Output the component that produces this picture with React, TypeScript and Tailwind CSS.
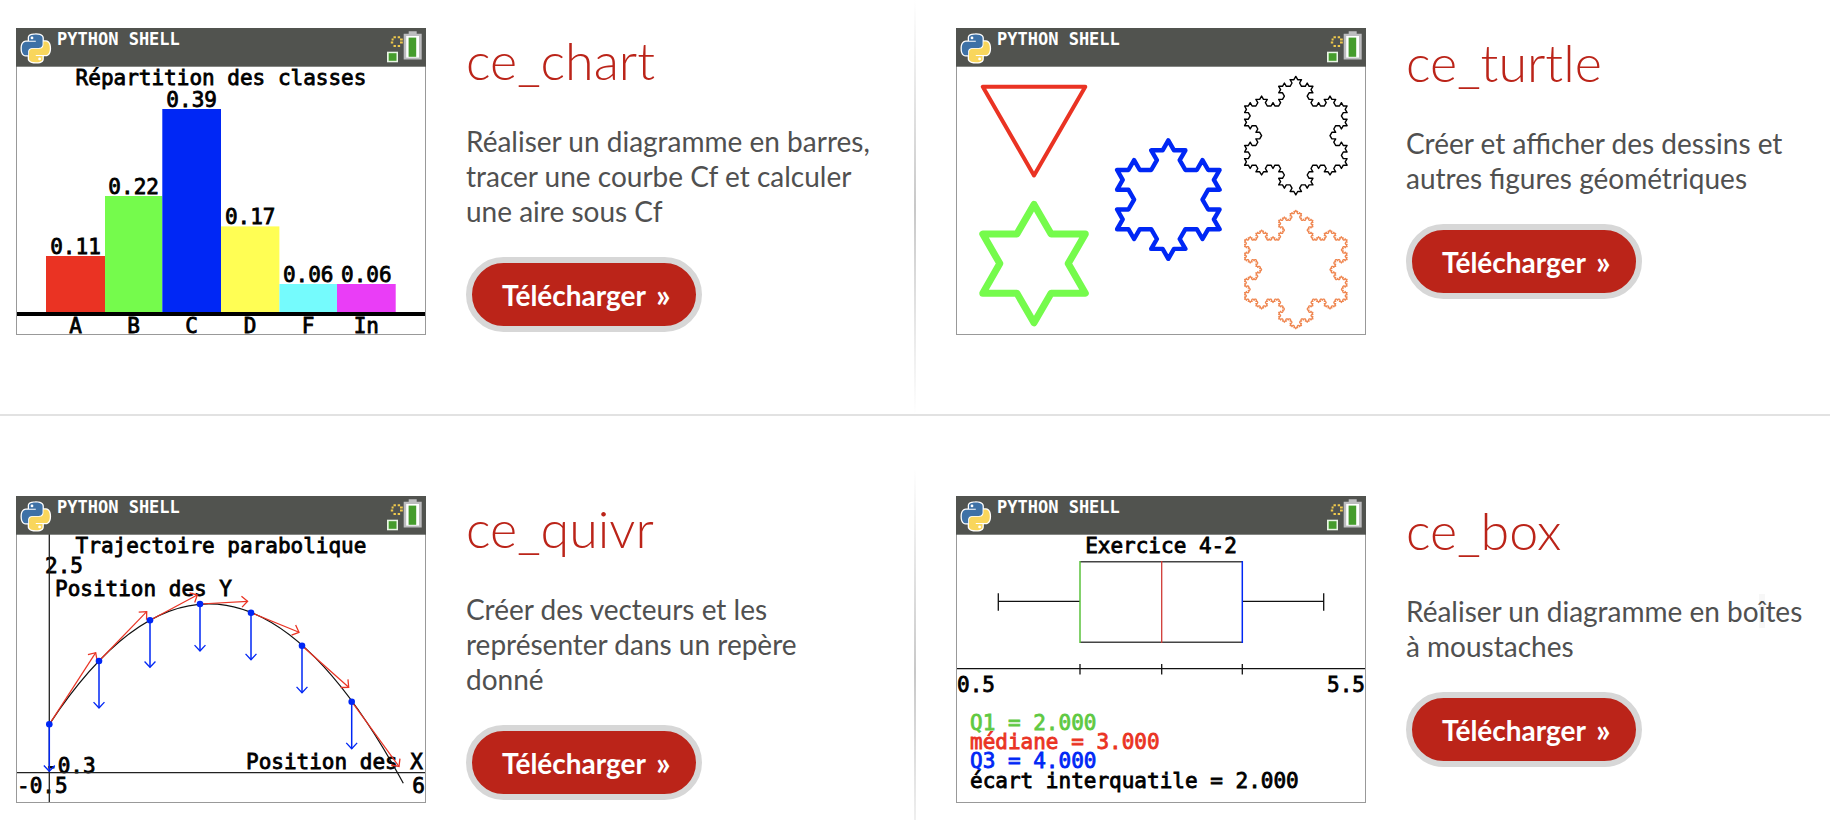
import type { ReactNode } from "react";

type Point = [number, number];

/* Replaces every edge by the four edges of the Koch curve, `depth` times. */
function koch(points: Point[], depth: number): Point[] {
  if (depth === 0) return points;
  const next: Point[] = [];
  points.forEach(([x1, y1], i) => {
    const [x2, y2] = points[(i + 1) % points.length];
    const dx = (x2 - x1) / 3;
    const dy = (y2 - y1) / 3;
    const h = Math.sqrt(3) / 2;
    next.push(
      [x1, y1],
      [x1 + dx, y1 + dy],
      [x1 + dx * 1.5 + dy * h, y1 + dy * 1.5 - dx * h],
      [x1 + dx * 2, y1 + dy * 2],
    );
  });
  return koch(next, depth - 1);
}

function Snowflake({ cx, top, depth, color, width }: { cx: number; top: number; depth: number; color: string; width: number }) {
  const side = 102.5;
  const base: Point[] = [
    [cx - side / 2, top],
    [cx + side / 2, top],
    [cx, top + (side * Math.sqrt(3)) / 2],
  ];
  const points = koch(base, depth)
    .map(([x, y]) => `${x.toFixed(1)},${y.toFixed(1)}`)
    .join(" ");
  return <polygon points={points} fill="none" stroke={color} strokeWidth={width} strokeLinejoin="round" />;
}

function Label({ x, y, anchor = "middle", color = "#000", children }: { x: number; y: number; anchor?: "start" | "middle" | "end"; color?: string; children: string }) {
  return (
    <text x={x} y={y} textAnchor={anchor} fill={color} stroke={color} strokeWidth={0.8} fontSize={21}>
      {children}
    </text>
  );
}

function Screen({ title, children }: { title: string; children: ReactNode }) {
  return (
    <svg viewBox="0 0 410 307" role="img" aria-label={title} className="w-[410px] shrink-0 overflow-visible font-['DejaVu_Sans_Mono',monospace]">
      <rect width={410} height={307} fill="#fff" />
      {children}
      <rect x={0.5} y={0.5} width={409} height={306} fill="none" stroke="#999" />
      <rect width={410} height={38.7} fill="#51534f" />
      <g transform="translate(3.8 4.4)" strokeLinejoin="round">
        <g fill="#fff" stroke="#fff" strokeWidth={2.6}>
          <path d={PYTHON_TOP} />
          <path d={PYTHON_BOTTOM} />
        </g>
        <path d={PYTHON_TOP} fill="#3e71a6" />
        <path d={PYTHON_BOTTOM} fill="#f9d65c" />
        <circle cx={12.2} cy={5.5} r={1.4} fill="#fff" />
        <circle cx={19.8} cy={26.5} r={1.4} fill="#fff" />
      </g>
      <text x={41} y={17} fill="#fff" fontSize={17} fontWeight={700}>
        PYTHON SHELL
      </text>
      <g fill="none" stroke="#efc94c" strokeWidth={2}>
        <path d="M377.5 9.3h2.4M381.7 9.3h2.4M377.5 18h2.4M381.7 18h2.4M375.6 11.4h2M384 11.4h2.8M374.8 14.6h2.4M384 14.6h2.8" />
      </g>
      <rect x={371} y={23.7} width={11} height={10.6} fill="#e9f5e5" />
      <rect x={372.7} y={25.2} width={7.8} height={7.6} fill="#459c2c" />
      <path d="M392.7 3.3h8v2.4h5v25.9h-18V5.7h5z" fill="#bdbdbf" />
      <rect x={390.2} y={8} width={12.8} height={21.6} fill="#fff" />
      <rect x={392.6} y={9.6} width={7.6} height={19.2} fill="#459c2c" />
    </svg>
  );
}

const PYTHON_TOP =
  "M15.885 2.1c-7.1 0-6.651 3.07-6.651 3.07v3.19h6.752v1H6.545S2 8.8 2 16.005s4.013 6.912 4.013 6.912H8.33v-3.361s-.13-4.013 3.9-4.013h6.762s3.772.06 3.772-3.652V5.8s.572-3.712-6.842-3.712z";
const PYTHON_BOTTOM =
  "M16.085 29.91c7.1 0 6.651-3.08 6.651-3.08v-3.18h-6.751v-1h9.47S30 23.158 30 15.995s-4.013-6.912-4.013-6.912H23.64V12.4s.13 4.013-3.9 4.013h-6.765S9.2 16.356 9.2 20.068V26.2s-.572 3.712 6.842 3.712z";

const BARS = [
  { name: "A", value: "0.11", x: 30, end: 89, y: 228, color: "#ea3323" },
  { name: "B", value: "0.22", x: 89, end: 146.3, y: 168, color: "#75fb4c" },
  { name: "C", value: "0.39", x: 146.3, end: 205, y: 81, color: "#0027f5" },
  { name: "D", value: "0.17", x: 205, end: 263.4, y: 198.4, color: "#fffe54" },
  { name: "F", value: "0.06", x: 263.4, end: 321, y: 256, color: "#75fbfd" },
  { name: "In", value: "0.06", x: 321, end: 379.7, y: 256, color: "#ea3df7" },
];

function ChartScreen() {
  return (
    <Screen title="Répartition des classes">
      <Label x={205} y={57}>Répartition des classes</Label>
      {BARS.map((b) => (
        <g key={b.name}>
          <rect x={b.x} y={b.y} width={b.end - b.x} height={286 - b.y} fill={b.color} />
          <Label x={(b.x + b.end) / 2} y={b.y - 2}>{b.value}</Label>
          <Label x={(b.x + b.end) / 2} y={304.6}>{b.name}</Label>
        </g>
      ))}
      <rect y={284} width={410} height={4} fill="#000" />
    </Screen>
  );
}

function TurtleScreen() {
  return (
    <Screen title="Flocons de Koch">
      <Snowflake cx={78} top={58.7} depth={0} color="#ea3323" width={4} />
      <Snowflake cx={78} top={206} depth={1} color="#75fb4c" width={7} />
      <Snowflake cx={212.3} top={142} depth={2} color="#0027f5" width={4.4} />
      <Snowflake cx={339.8} top={78} depth={3} color="#000" width={1.4} />
      <Snowflake cx={339.8} top={212} depth={4} color="#ef8650" width={1.3} />
    </Screen>
  );
}

const VECTORS: { from: Point; to: Point }[] = [
  { from: [33.3, 228.3], to: [79.7, 156.7] },
  { from: [83, 165], to: [130.7, 115.7] },
  { from: [134, 124.3], to: [181.3, 99] },
  { from: [184, 108], to: [231.6, 105.3] },
  { from: [235, 116.7], to: [283, 136.3] },
  { from: [286, 149.7], to: [332.7, 191.3] },
  { from: [335.7, 205.7], to: [383, 270.5] },
];

function Arrow({ from, to, color, width }: { from: Point; to: Point; color: string; width: number }) {
  const angle = Math.atan2(to[1] - from[1], to[0] - from[0]);
  const wing = (turn: number) => `${to[0] - 8 * Math.cos(angle + turn)} ${to[1] - 8 * Math.sin(angle + turn)}`;
  return (
    <g fill="none" stroke={color}>
      <path d={`M${from[0]} ${from[1]}L${to[0]} ${to[1]}`} strokeWidth={width} />
      <path d={`M${wing(0.75)}L${to[0]} ${to[1]}L${wing(-0.75)}`} strokeWidth={1.3} />
    </g>
  );
}

function QuiverScreen() {
  return (
    <Screen title="Trajectoire parabolique">
      <Label x={205} y={57}>Trajectoire parabolique</Label>
      <Label x={29} y={77} anchor="start">2.5</Label>
      <Label x={39} y={100} anchor="start">Position des Y</Label>
      <Label x={29} y={277} anchor="start">-0.3</Label>
      <Label x={1} y={297} anchor="start">-0.5</Label>
      <Label x={409} y={297} anchor="end">6</Label>
      <Label x={407} y={273} anchor="end">Position des X</Label>
      <path d="M33.3 38V306M0 276.7H410" stroke="#222" strokeWidth={1.3} />
      <path d="M33.3 228.3Q210.3 -39 387.3 287.3" fill="none" stroke="#111" strokeWidth={1.2} />
      {VECTORS.map(({ from, to }) => (
        <g key={from[0]}>
          <Arrow from={from} to={to} color="#ea3323" width={1.2} />
          <Arrow from={from} to={[from[0], from[1] + 47]} color="#0027f5" width={1.5} />
          <circle cx={from[0]} cy={from[1]} r={3.3} fill="#0027f5" />
        </g>
      ))}
    </Screen>
  );
}

function BoxScreen() {
  return (
    <Screen title="Exercice 4-2">
      <Label x={205} y={57}>Exercice 4-2</Label>
      <g fill="none" stroke="#111" strokeWidth={1.3}>
        <path d="M42.3 97.3V114.7M42.3 105.4H124M367.7 97.3V114.7M286.3 105.4H367.7" />
        <path d="M0 172.7H410M124 168V178.4M205.7 168V178.4M286.3 168V178.4" />
        <path d="M124 65.7H286.3M124 146.3H286.3" strokeWidth={1.6} stroke="#444" />
        <path d="M124 65V147" stroke="#5ac23b" strokeWidth={1.5} />
        <path d="M205.7 65V147" stroke="#d03a36" />
        <path d="M286.3 65V147" stroke="#0027f5" strokeWidth={1.5} />
      </g>
      <Label x={1} y={196} anchor="start">0.5</Label>
      <Label x={409} y={196} anchor="end">5.5</Label>
      <Label x={14} y={234} anchor="start" color="#5fc943">Q1 = 2.000</Label>
      <Label x={14} y={253} anchor="start" color="#ea3323">médiane = 3.000</Label>
      <Label x={14} y={272} anchor="start" color="#0027f5">Q3 = 4.000</Label>
      <Label x={14} y={292} anchor="start">écart interquatile = 2.000</Label>
    </Screen>
  );
}

function Module({ name, screen, className, textClassName = "", children }: { name: string; screen: ReactNode; className: string; textClassName?: string; children: ReactNode }) {
  return (
    <article className={`flex items-start gap-10 pt-7 ${className}`}>
      {screen}
      <div className={`min-w-0 flex-1 ${textClassName}`}>
        <h2 className="text-[52px] leading-[64px] font-light text-[#bb2419]">{name}</h2>
        <p className="mt-8 text-[28px] leading-[35px] text-[#505050]">{children}</p>
        <a
          href={`#${name}`}
          className="mt-7 inline-flex h-[75px] items-center gap-2.5 rounded-full border-6 border-[#d7d7d7] bg-[#bb2419] pr-[25px] pl-[30px] text-[28px] font-bold text-white"
        >
          Télécharger <span className="text-[32px] leading-8">»</span>
        </a>
      </div>
    </article>
  );
}

export default function App() {
  return (
    <main className="bg-white font-[Lato,sans-serif]">
      <section className="grid grid-cols-[1fr_2px_1fr] border-b-2 border-[#e2e2e2]">
        <Module name="ce_chart" screen={<ChartScreen />} className="pr-10 pb-[79px] pl-4">
          Réaliser un diagramme en barres, tracer une courbe Cf et calculer une aire sous Cf
        </Module>
        <div className="bg-linear-to-b from-white via-[#c8c8c8] to-white" />
        <Module name="ce_turtle" screen={<TurtleScreen />} className="pr-4 pb-[79px] pl-10" textClassName="pt-0.5">
          Créer et afficher des dessins et autres figures géométriques
        </Module>
      </section>
      <section className="mt-[52px] grid grid-cols-[1fr_2px_1fr]">
        <Module name="ce_quivr" screen={<QuiverScreen />} className="pr-10 pb-[17px] pl-4">
          Créer des vecteurs et les représenter dans un repère donné
        </Module>
        <div className="bg-linear-to-b from-white via-[#c8c8c8] via-58% to-[#efefef]" />
        <Module name="ce_box" screen={<BoxScreen />} className="pr-4 pb-[17px] pl-10" textClassName="pt-0.5">
          Réaliser un diagramme en bo<span className="bg-[#f7f7f7]">î</span>tes à moustaches
        </Module>
      </section>
    </main>
  );
}
